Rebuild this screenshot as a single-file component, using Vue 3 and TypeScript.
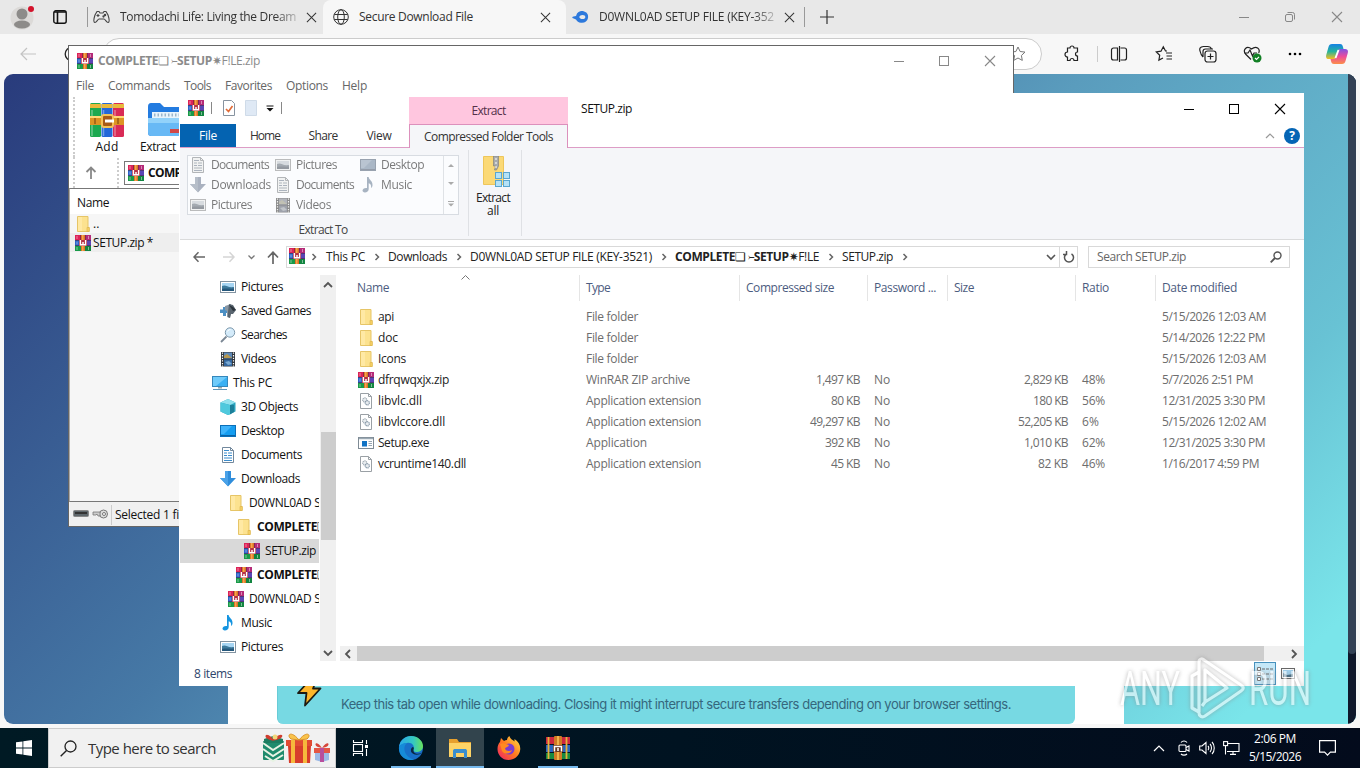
<script setup lang="ts">
interface Crumb { text: string; w: number; fancy?: boolean }
interface NavItem { icon: string; text: string; w: number; level: number; fancy?: boolean; active?: boolean }
interface FileRow {
  icon: string; name: string; nw: number; type: string; tw: number
  packed?: string; pw?: number; size?: string; sw?: number; ratio?: string; date: string; dw: number
}

// Adjusts tracking so that a label occupies the given width in pixels.
const vFit = {
  mounted(el: HTMLElement, binding: { value: number | undefined }) {
    const target = binding.value
    const count = Array.from(el.textContent ?? '').length
    if (!target || !count) return
    let spacing = 0
    for (let i = 0; i < 3; i++) {
      spacing += (target - el.getBoundingClientRect().width) / count
      el.style.letterSpacing = `${spacing.toFixed(3)}px`
    }
  },
}

const menus = [
  { text: 'File', w: 18 }, { text: 'Commands', w: 62 }, { text: 'Tools', w: 27 },
  { text: 'Favorites', w: 47 }, { text: 'Options', w: 42 }, { text: 'Help', w: 25 },
]
const crumbs: Crumb[] = [
  { text: 'This PC', w: 39 }, { text: 'Downloads', w: 59 },
  { text: 'D0WNL0AD SETUP FILE (KEY-3521)', w: 182 },
  { text: '', w: 144, fancy: true }, { text: 'SETUP.zip', w: 51 },
]
const targets = [
  { icon: 'doc', text: 'Documents', w: 58 }, { icon: 'pic', text: 'Pictures', w: 41 }, { icon: 'desk', text: 'Desktop', w: 43 },
  { icon: 'down', text: 'Downloads', w: 60 }, { icon: 'doc', text: 'Documents', w: 58 }, { icon: 'music', text: 'Music', w: 31 },
  { icon: 'pic', text: 'Pictures', w: 41 }, { icon: 'video', text: 'Videos', w: 35 },
]
const nav: NavItem[] = [
  { icon: 'pic', text: 'Pictures', w: 42, level: 1 },
  { icon: 'games', text: 'Saved Games', w: 70, level: 1 },
  { icon: 'lens', text: 'Searches', w: 46, level: 1 },
  { icon: 'video', text: 'Videos', w: 35, level: 1 },
  { icon: 'pc', text: 'This PC', w: 39, level: 0 },
  { icon: 'cube', text: '3D Objects', w: 57, level: 1 },
  { icon: 'desk', text: 'Desktop', w: 43, level: 1 },
  { icon: 'doc', text: 'Documents', w: 61, level: 1 },
  { icon: 'down', text: 'Downloads', w: 59, level: 1 },
  { icon: 'folder', text: 'D0WNL0AD SETUP FILE (KEY-3521)', w: 182, level: 2 },
  { icon: 'folder', text: '', w: 144, level: 3, fancy: true },
  { icon: 'rar', text: 'SETUP.zip', w: 51, level: 4, active: true },
  { icon: 'rar', text: '', w: 144, level: 3, fancy: true },
  { icon: 'rar', text: 'D0WNL0AD SETUP FILE (KEY-3521)', w: 182, level: 2 },
  { icon: 'music', text: 'Music', w: 31, level: 1 },
  { icon: 'pic', text: 'Pictures', w: 42, level: 1 },
]
const columns = [
  { text: 'Name', w: 32 }, { text: 'Type', w: 24 }, { text: 'Compressed size', w: 88 },
  { text: 'Password ...', w: 62 }, { text: 'Size', w: 20 }, { text: 'Ratio', w: 27 }, { text: 'Date modified', w: 75 },
]
const files: FileRow[] = [
  { icon: 'folder', name: 'api', nw: 16, type: 'File folder', tw: 52, date: '5/15/2026 12:03 AM', dw: 104 },
  { icon: 'folder', name: 'doc', nw: 20, type: 'File folder', tw: 52, date: '5/14/2026 12:22 PM', dw: 103 },
  { icon: 'folder', name: 'Icons', nw: 28, type: 'File folder', tw: 52, date: '5/15/2026 12:03 AM', dw: 104 },
  { icon: 'rar', name: 'dfrqwqxjx.zip', nw: 71, type: 'WinRAR ZIP archive', tw: 104, packed: '1,497 KB', pw: 44, size: '2,829 KB', sw: 44, ratio: '48%', date: '5/7/2026 2:51 PM', dw: 91 },
  { icon: 'dll', name: 'libvlc.dll', nw: 44, type: 'Application extension', tw: 115, packed: '80 KB', pw: 29, size: '180 KB', sw: 35, ratio: '56%', date: '12/31/2025 3:30 PM', dw: 103 },
  { icon: 'dll', name: 'libvlccore.dll', nw: 67, type: 'Application extension', tw: 115, packed: '49,297 KB', pw: 50, size: '52,205 KB', sw: 50, ratio: '6%', date: '5/15/2026 12:02 AM', dw: 104 },
  { icon: 'exe', name: 'Setup.exe', nw: 51, type: 'Application', tw: 61, packed: '392 KB', pw: 35, size: '1,010 KB', sw: 44, ratio: '62%', date: '12/31/2025 3:30 PM', dw: 103 },
  { icon: 'dll', name: 'vcruntime140.dll', nw: 88, type: 'Application extension', tw: 115, packed: '45 KB', pw: 29, size: '82 KB', sw: 30, ratio: '46%', date: '1/16/2017 4:59 PM', dw: 97 },
]
</script>

<template>
  <div class="desktop">
    <svg class="defs" width="0" height="0">
      <symbol id="rar" viewBox="0 0 16 16">
        <rect width="16" height="16" fill="#472436" />
        <rect width="5.500" height="5" fill="#dc2357" /><rect x="10.500" width="5.500" height="5" fill="#b52a78" />
        <rect y="5.500" width="5" height="5" fill="#2b62c9" /><rect x="11" y="5.500" width="5" height="5" fill="#5a45b5" />
        <rect y="11" width="6" height="5" fill="#189a48" /><rect x="10" y="11" width="6" height="5" fill="#128540" />
        <path d="M2 1v3M2 6.500v3M2 12v3M13.500 1v3M13.500 12v3" stroke="#fff" opacity=".45" />
        <rect x="6" width="4" height="16" fill="#dd7427" /><rect x="7" width="1.500" height="16" fill="#f7a64f" />
        <rect x="4" y="5" width="8" height="6" fill="#b53045" />
        <path d="M5.400 5v4.700h5.200V5M8 7v2.500" fill="none" stroke="#fff" stroke-width="1.400" />
      </symbol>
      <symbol id="folder" viewBox="0 0 16 16">
        <path d="M2.500.5h10.500v11h1v4h-11.500z" fill="#fce28f" stroke="#e6c567" /><path d="M3 1h4v14H3z" fill="#ffe9a4" /><path d="M12 11.500h2.300v4H12z" fill="#f6d268" stroke="#dcb248" stroke-width=".6" />
      </symbol>
      <symbol id="doc" viewBox="0 0 16 16">
        <path d="M2.500.5h8l3 3v12h-11z" fill="#fff" stroke="#72889c" /><path d="M10.500.5v3h3" fill="none" stroke="#72889c" /><path d="M4 3.500h5M4 6h3m1 0h4M4 8.500h3m1 0h4M4 11h8M4 13.500h8" stroke="#3b8ccc" stroke-width="1.200" />
      </symbol>
      <symbol id="pic" viewBox="0 0 16 16">
        <rect x=".5" y="2.500" width="15" height="11" fill="#fff" stroke="#8293a1" /><rect x="2" y="4" width="12" height="8" fill="#a6d5f3" /><path d="M2 7c4-2 5 2 12 1v4H2z" fill="#3d7a9c" /><path d="M2 10c4-1 8 0 12-.5V12H2z" fill="#24577b" />
      </symbol>
      <symbol id="games" viewBox="0 0 16 16">
        <path d="M0 6.500h3V4h3v3h2v3H6v3H3v-3H0z" fill="#4b8fc4" /><path d="M5 3l6-2v6l-1 8-3-1V8L5 7z" fill="#8a97a3" /><path d="M9 1l4 1 3 5-3 4h-2l-1 4-2-1V9z" fill="#59656f" /><path d="M9 2l4 2 3 3-3 1z" fill="#2b343c" />
      </symbol>
      <symbol id="lens" viewBox="0 0 16 16">
        <path d="M1 15l5.500-5.500" stroke="#7b8794" stroke-width="1.800" /><circle cx="10" cy="5.500" r="4.700" fill="#d4ebfa" stroke="#7d98ac" /><path d="M7.500 4.500a3 3 0 0 1 3-2" stroke="#fff" fill="none" />
      </symbol>
      <symbol id="video" viewBox="0 0 16 16">
        <rect x="1" y="1" width="14" height="14.500" fill="#30363c" /><rect x="4" y="1.500" width="8" height="6" fill="#5e89b8" /><rect x="4" y="8.500" width="8" height="6.500" fill="#34679e" /><path d="M4 5l3-2 5 4H4z" fill="#b79950" /><path d="M5 11l4-1 3 3-4 1z" fill="#7aa9d2" /><path d="M2.500 1.500v14M13.500 1.500v14" stroke="#fff" stroke-width="1.200" stroke-dasharray="1.300 1.300" />
      </symbol>
      <symbol id="pc" viewBox="0 0 16 16">
        <rect x=".5" y="1.500" width="15" height="10" fill="#39b0f3" stroke="#3587bb" /><path d="M1 2h14L4 11H1z" fill="#6fcbfa" /><path d="M6 12h4v1.500H6z" fill="#9aa" /><path d="M1 14.500h14" stroke="#5f95b8" />
      </symbol>
      <symbol id="cube" viewBox="0 0 16 16">
        <path d="M8 0l7.500 3.500v9L8 16 .5 12.500v-9z" fill="#2aa3bd" /><path d="M8 0l7.500 3.500L10 6 .5 3.500z" fill="#93e2ee" /><path d="M.5 3.500L10 6v9.500L8 16 .5 12.500z" fill="#50c9dd" /><path d="M10 6h4v7l-4 2.500z" fill="#1c7f99" />
      </symbol>
      <symbol id="desk" viewBox="0 0 16 16">
        <rect x=".5" y="2.500" width="15" height="11" fill="#159df0" stroke="#0b6fb8" /><path d="M1 3h11L4 11H1z" fill="#3eb3fb" /><path d="M1 12.500h14" stroke="#0a62a5" />
      </symbol>
      <symbol id="down" viewBox="0 0 16 16">
        <path d="M5 0h6v7h5l-8 8.500L0 7h5z" fill="#2f8ddb" /><path d="M5 0h3v15L0 7h5z" fill="#4aa2e8" />
      </symbol>
      <symbol id="music" viewBox="0 0 16 16">
        <path d="M7 0h1.600c.4 3 4.400 4 3.900 8.500-.1 1-.6 2-1.500 2.500.6-3-.6-4-2.300-4.700V12c0 2-1.700 3.500-3.800 3.500-1.500 0-2.400-.8-2.400-1.900C2.500 12 4.500 10.500 7 11z" fill="#1494e0" />
      </symbol>
      <symbol id="dll" viewBox="0 0 16 16">
        <path d="M2.500.5h8l3 3v12h-11z" fill="#fff" stroke="#9aa0a5" /><path d="M10.500.5v3h3" fill="none" stroke="#9aa0a5" /><circle cx="6.800" cy="7" r="2.100" fill="#e8ecef" stroke="#9aa5ae" stroke-width="1.100" stroke-dasharray="1.200 .5" /><circle cx="9.300" cy="9.800" r="2.100" fill="#e8ecef" stroke="#8396a6" stroke-width="1.100" stroke-dasharray="1.200 .5" />
      </symbol>
      <symbol id="exe" viewBox="0 0 16 16">
        <rect x=".5" y="2.500" width="15" height="11" fill="#fff" stroke="#7f8b95" /><path d="M1 3.500h14" stroke="#9aa8b3" stroke-width="1.500" /><rect x="4" y="6" width="5" height="5.500" fill="#1273c4" /><path d="M10.500 6.500H14m-3.500 2H14m-3.500 2H14" stroke="#98a6b2" />
      </symbol>
      <symbol id="close" viewBox="0 0 12 12"><path d="M1 1l10 10M11 1L1 11" fill="none" stroke="currentColor" stroke-width="1.100" /></symbol>
      <symbol id="chev" viewBox="0 0 6 8"><path d="M1.500 1l3 3-3 3" fill="none" stroke="currentColor" stroke-width="1.500" /></symbol>
    </svg>

    <div class="tabstrip">
      <svg class="avatar" width="26" height="26" viewBox="0 0 26 26"><circle cx="12" cy="14" r="11.500" fill="#dcdad8" /><circle cx="12" cy="10" r="5.500" fill="#8d8b89" /><ellipse cx="12" cy="20.500" rx="8" ry="4" fill="#8d8b89" /><circle cx="21" cy="5" r="3" fill="#d3132c" /></svg>
      <svg class="workspace" width="14" height="14" viewBox="0 0 14 14"><rect x=".8" y=".8" width="12.400" height="12.400" rx="2" fill="none" stroke="#111" stroke-width="1.400" /><path d="M1 2h12M4.500 2v11" stroke="#111" stroke-width="1.600" /></svg>
      <i class="sep"></i>
      <div class="tab first">
        <svg width="17" height="14" viewBox="0 0 17 14" fill="none" stroke="#444" stroke-width="1.100"><path d="M4 1.500h2l1 1.500h3l1-1.500h2l2 3.500c1 3 1.500 7 .2 7.500-1.500.5-3-3.500-4.200-3.500H6c-1.200 0-2.700 4-4.200 3.500C.5 12 1 8 2 5z" /><path d="M5 4v3M3.500 5.500h3" /><circle cx="12" cy="5" r=".7" /><circle cx="10.500" cy="6.500" r=".6" /></svg>
        <span class="t tabtext" v-fit="176">Tomodachi Life: Living the Dream</span>
        <svg class="x" width="11" height="11"><use href="#close" /></svg>
      </div>
      <div class="tab active">
        <svg width="16" height="16" viewBox="0 0 16 16" fill="none" stroke="#333" stroke-width="1"><circle cx="8" cy="8" r="7.300" /><ellipse cx="8" cy="8" rx="3.300" ry="7.300" /><path d="M1.300 5.500h13.400M1.300 10.500h13.400" /></svg>
        <span class="t tabtext" v-fit="114">Secure Download File</span>
        <svg class="x" width="11" height="11"><use href="#close" /></svg>
      </div>
      <div class="tab third">
        <svg width="17" height="14" viewBox="0 0 17 14"><path d="M5 3.500C7 1 10 1 11.500 1.200 15 2 16.500 4.500 16 8c-.6 3.500-3.500 5.200-7 4.800-2.500-.3-4-1.500-5-3.300L.5 8C0 7.500.5 6.500 1.500 6.500L4 6z" fill="#2d79dc" /><ellipse cx="10.500" cy="7" rx="2.800" ry="2" fill="#e8e8e8" /><path d="M7.500 7h2" stroke="#e8e8e8" stroke-width="1.500" /></svg>
        <span class="t tabtext" v-fit="175">D0WNL0AD SETUP FILE (KEY-352</span>
        <svg class="x" width="11" height="11"><use href="#close" /></svg>
      </div>
      <i class="sep end"></i>
      <svg class="plus" width="14" height="14" viewBox="0 0 14 14"><path d="M7 0v14M0 7h14" stroke="#333" stroke-width="1.200" /></svg>
      <div class="capt">
        <svg width="10" height="10"><path d="M0 5.500h10" stroke="#888" /></svg>
        <svg width="10" height="10" fill="none" stroke="#888"><rect x=".5" y="2.500" width="7" height="7" rx="1.500" /><path d="M2.500.5h5a2 2 0 0 1 2 2v5" /></svg>
        <svg width="12" height="12" color="#888"><use href="#close" /></svg>
      </div>
    </div>

    <div class="toolbar">
      <svg class="back" width="17" height="14" viewBox="0 0 17 14"><path d="M16 7H1M7 1L1 7l6 6" fill="none" stroke="#c3c3c3" stroke-width="1.200" /></svg>
      <svg class="reload" width="16" height="16" viewBox="0 0 16 16"><circle cx="8" cy="8" r="6.800" fill="none" stroke="#222" stroke-width="1.300" /></svg>
      <div class="omnibox"><svg width="16" height="16" viewBox="0 0 16 16"><path d="M8 1l2.100 4.500 4.900.6-3.600 3.400.9 4.900L8 12l-4.300 2.400.9-4.900L1 6.100l4.900-.6z" fill="none" stroke="#777" /></svg></div>
      <div class="tools">
        <svg width="18" height="18" viewBox="0 0 18 18" fill="none" stroke="#222" stroke-width="1.200"><path d="M4.500 3H7a2 2 0 0 1 4 0h3.500v4a2 2 0 0 0 0 4v4.500H11a2 2 0 0 0-4 0H4.500V12a2.300 2.300 0 0 1 0-5z" /></svg>
        <i class="tsep"></i>
        <svg width="18" height="18" viewBox="0 0 18 18" fill="none" stroke="#222" stroke-width="1.200"><path d="M7.500 3H3.500a2 2 0 0 0-2 2v8a2 2 0 0 0 2 2h4zM10.500 3h4a2 2 0 0 1 2 2v8a2 2 0 0 1-2 2h-4M9.500 1v16" /></svg>
        <svg width="18" height="18" viewBox="0 0 18 18" fill="none" stroke="#222" stroke-width="1.200"><path d="M12 6h-1.500L8.300 1.800 6 6.200l-4.700.8 3.400 3.300-.8 4.800L8 13M11 8h6M11.500 11H17M11.500 14H17" /></svg>
        <svg width="18" height="18" viewBox="0 0 18 18" fill="none" stroke="#222" stroke-width="1.200"><rect x="6" y="6" width="11" height="11" rx="2.500" /><path d="M11.500 8.500v6M8.500 11.500h6M4 12C3 11 1.500 8 1.200 6.500-.1 3 1.500 2 4.500 1.500h4c2 0 3.500.8 4 2.500M4 12V6.500c0-1.500.8-2.500 2.500-2.500H14" /></svg>
        <svg width="19" height="18" viewBox="0 0 19 18"><path d="M8 14.500L2.500 9C-.5 5 3.500 0 8.500 4c5-4 9 0 7.200 4M1 8h4l2-3 2.500 6L11 8h3" fill="none" stroke="#222" stroke-width="1.200" /><circle cx="14" cy="13" r="4.500" fill="#128025" /><path d="M12 13l1.500 1.500L16 11.800" fill="none" stroke="#fff" stroke-width="1.200" /></svg>
        <svg width="14" height="4" viewBox="0 0 14 4"><circle cx="2" cy="2" r="1.300" /><circle cx="7" cy="2" r="1.300" /><circle cx="12" cy="2" r="1.300" /></svg>
        <svg width="22" height="20" viewBox="0 0 22 20"><defs><linearGradient id="cpa" x1="0" y1="0" x2="0" y2="1"><stop offset="0" stop-color="#1581e5" /><stop offset=".5" stop-color="#26b49b" /><stop offset="1" stop-color="#f7bd22" /></linearGradient><linearGradient id="cpb" x1="0" y1="0" x2="0" y2="1"><stop offset="0" stop-color="#7f52e4" /><stop offset=".5" stop-color="#ed4b9a" /><stop offset="1" stop-color="#fb8f49" /></linearGradient></defs><path d="M6 0h8c2 0 2.500 1 3 3l.5 2h-3c-2 0-2.500 1.500-3 3L10 13c-.5 1.500-1 2-3 2H3c-3 0-3.500-2-2.500-5l2-7C3 1 4 0 6 0z" fill="url(#cpa)" /><path d="M16 20H8c-2 0-2.500-1-3-3l-.5-2h3c2 0 2.500-1.500 3-3L12 7c.5-1.500 1-2 3-2h4c3 0 3.500 2 2.500 5l-2 7c-.5 2-1.500 3-3.500 3z" fill="url(#cpb)" /><path d="M12.500 6L9.500 14" stroke="#fff" stroke-width="2" /></svg>
      </div>
    </div>

    <div class="page">
      <div class="card">
        <div class="notice">
          <svg width="26" height="28" viewBox="0 0 26 28"><path d="M13 1L2 13h8.500L9 25.500 24.500 8.500H17L20 1z" fill="#fdb62a" stroke="#1c1a12" stroke-width="1.800" stroke-linejoin="round" /></svg>
          <span class="t keep" v-fit="670">Keep this tab open while downloading. Closing it might interrupt secure transfers depending on your browser settings.</span>
        </div>
      </div>
      <div class="pagebar"><i></i></div>
    </div>

    <div class="winrar">
      <div class="wtitle">
        <svg width="16" height="16"><use href="#rar" /></svg>
        <span class="t" v-fit="162"><b>COMPLETE❏</b> <small>⤚</small><b>SETUP✷</b>F!LE.zip</span>
        <div class="wcap">
          <svg width="10" height="10"><path d="M0 5.500h10" stroke="#888" /></svg>
          <svg width="10" height="10"><rect x=".5" y=".5" width="9" height="9" fill="none" stroke="#888" /></svg>
          <svg width="12" height="12" color="#888"><use href="#close" /></svg>
        </div>
      </div>
      <div class="wmenu"><span v-for="m in menus" :key="m.text" class="t" v-fit="m.w">{{ m.text }}</span></div>
      <div class="wtools">
        <div class="wbtn add">
          <svg width="36" height="36" viewBox="0 0 36 36"><rect x="1" y="1" width="11" height="34" rx="1.500" fill="#1ca94f" /><rect x="12.500" y="1" width="11" height="34" rx="1.500" fill="#2468d8" /><rect x="24" y="1" width="11" height="34" rx="1.500" fill="#d92b56" /><path d="M1 2h11v4H1zM12.500 2h11v4h-11zM24 2h11v4H24z" fill="#e9b93c" /><path d="M3 8v26M14.500 8v26M26 8v26" stroke="#fff" stroke-width="1.500" opacity=".35" /><path d="M1 14h34v9H1z" fill="#dd9424" /><path d="M1 15h34" stroke="#ffd978" stroke-width="2" /><rect x="13" y="13" width="11" height="12" rx="2" fill="#a85a17" stroke="#f4c258" stroke-width="2" /><path d="M16 19h9" stroke="#fff" stroke-width="3" /><path d="M6 16v6M29 16v6" stroke="#985a13" stroke-width="1.500" /></svg>
          <span class="t" v-fit="23">Add</span>
        </div>
        <div class="wbtn ext">
          <svg width="36" height="36" viewBox="0 0 36 36"><path d="M1 5c0-3 1-4 3-4h9l4 4h19v29H5c-3 0-4-1-4-4z" fill="#237be0" /><path d="M5 10h31v6H5z" fill="#e9f4fc" /><path d="M7 13h29" stroke="#9eb6ca" stroke-width="3" stroke-dasharray="1.500 2" /><path d="M1 16h35v18H5c-3 0-4-1-4-4z" fill="#68b9f5" /><path d="M1 16h35v5H1z" fill="#92d2fa" /><rect x="23" y="27" width="13" height="4" fill="#d14747" /></svg>
          <span class="t" v-fit="36">Extract</span>
        </div>
      </div>
      <div class="waddr">
        <svg width="12" height="14" viewBox="0 0 12 14"><path d="M6 13V2M1.500 6L6 1.500 10.500 6" fill="none" stroke="#888" stroke-width="1.800" /></svg>
        <i></i>
        <div class="wfield"><svg width="16" height="16"><use href="#rar" /></svg><b class="t" v-fit="58">COMPLETE</b></div>
      </div>
      <div class="wlist">
        <div class="whead"><span class="t" v-fit="32">Name</span></div>
        <div class="wrow"><svg width="16" height="16"><use href="#folder" /></svg><span>..</span></div>
        <div class="wrow sel"><svg width="16" height="16"><use href="#rar" /></svg><span class="t" v-fit="60">SETUP.zip *</span></div>
      </div>
      <div class="wstatus">
        <svg width="16" height="8" viewBox="0 0 16 8"><rect x=".5" y=".5" width="15" height="6" rx="1" fill="#5f676b" stroke="#888" /><path d="M2 3h12" stroke="#333" stroke-width="2" /></svg>
        <svg width="16" height="10" viewBox="0 0 16 10"><circle cx="11.500" cy="5" r="4" fill="#ddd" stroke="#777" /><circle cx="12" cy="5" r="1.500" fill="#fff" stroke="#777" /><path d="M8 3H1v3h3l1-1 1 2h2z" fill="#ccc" stroke="#777" stroke-width=".8" /></svg>
        <i></i><span class="t" v-fit="64">Selected 1 fi</span>
      </div>
    </div>

    <div class="explorer">
      <div class="etop">
        <div class="qat">
          <svg width="16" height="16"><use href="#rar" /></svg><i></i>
          <svg class="q1" width="12" height="16" viewBox="0 0 12 16"><path d="M.5.500h8l3 3v12H.5z" fill="#fff" stroke="#8793a0" /><path d="M3 9l2.500 2.500L9.500 6" fill="none" stroke="#e06b38" stroke-width="1.700" /></svg>
          <svg class="q2" width="12" height="16" viewBox="0 0 12 16"><path d="M.5.500h11v15H.5z" fill="#dfe9f5" stroke="#cfdbe8" /></svg>
          <svg class="q3" width="8" height="7" viewBox="0 0 8 7"><path d="M.5 1h7" stroke="#111" /><path d="M.5 3h7L4 6.500z" fill="#111" /></svg><i></i>
        </div>
        <div class="etabs">
          <span class="filetab"><span class="t" v-fit="18">File</span></span>
          <span class="etab"><span class="t" v-fit="30">Home</span></span>
          <span class="etab"><span class="t" v-fit="29">Share</span></span>
          <span class="etab"><span class="t" v-fit="25">View</span></span>
        </div>
        <div class="ctx"><div class="ctxhead"><span class="t" v-fit="34">Extract</span></div><div class="ctxtab"><span class="t" v-fit="129">Compressed Folder Tools</span></div></div>
        <div class="rest">
          <div class="etitle"><span class="t" v-fit="51">SETUP.zip</span>
            <div class="ecap">
              <svg width="10" height="10"><path d="M0 5.500h10" stroke="#000" /></svg>
              <svg width="10" height="10"><rect x=".5" y=".5" width="9" height="9" fill="none" stroke="#000" /></svg>
              <svg width="12" height="12" color="#000"><use href="#close" /></svg>
            </div>
          </div>
          <div class="ehelp">
            <svg width="10" height="6"><path d="M1 5l4-4 4 4" fill="none" stroke="#999" stroke-width="1.200" /></svg>
            <span class="help">?</span>
          </div>
        </div>
      </div>

      <div class="ribbon">
        <div class="group">
          <div class="gallery">
            <div class="gitems"><div v-for="(g, i) in targets" :key="i" class="gitem"><svg width="16" height="16"><use :href="'#' + g.icon" /></svg><span class="t" v-fit="g.w">{{ g.text }}</span></div></div>
            <div class="gscroll">
              <svg width="6" height="4"><path d="M0 4l3-3 3 3z" fill="#aaa" /></svg>
              <svg width="6" height="4"><path d="M0 0l3 3 3-3z" fill="#aaa" /></svg>
              <svg width="6" height="6"><path d="M0 .5h6" stroke="#aaa" /><path d="M0 2.500l3 3 3-3z" fill="#aaa" /></svg>
            </div>
          </div>
          <div class="glabel"><span class="t" v-fit="49">Extract To</span></div>
        </div>
        <div class="extractall">
          <svg width="28" height="32" viewBox="0 0 28 32"><path d="M.500.500h20v28H.5z" fill="#fbd976" stroke="#eec65b" /><path d="M10.500 0h5v10l-2 4h-2l1-4h-2z" fill="#a9abad" stroke="#77797b" stroke-width=".6" /><path d="M13 2v11" stroke="#fff" stroke-dasharray="2 2" /><g fill="#b4e2f8" stroke="#5ba6cf"><rect x="12.500" y="16.500" width="6" height="6" /><rect x="20.500" y="16.500" width="6" height="6" /><rect x="12.500" y="24.500" width="6" height="6" /><rect x="20.500" y="24.500" width="6" height="6" /></g></svg>
          <span class="t" v-fit="34">Extract</span><span class="t" v-fit="12">all</span>
        </div>
      </div>

      <div class="addrrow">
        <svg width="12" height="12" viewBox="0 0 12 12"><path d="M12 6H1M5.500 1.200L1 6l4.500 4.800" fill="none" stroke="#666" stroke-width="1.500" /></svg>
        <svg width="12" height="12" viewBox="0 0 12 12"><path d="M0 6h11M6.500 1.200L11 6l-4.500 4.800" fill="none" stroke="#d5d5d5" stroke-width="1.500" /></svg>
        <svg class="recent" width="7" height="5"><path d="M.5.500l3 3 3-3" fill="none" stroke="#777" stroke-width="1.300" /></svg>
        <svg width="12" height="13" viewBox="0 0 12 13"><path d="M6 13V1.500M1 6.500L6 1.200l5 5.300" fill="none" stroke="#666" stroke-width="1.700" /></svg>
        <div class="addr">
          <svg width="16" height="16"><use href="#rar" /></svg>
          <svg class="c0" width="6" height="8"><use href="#chev" /></svg>
          <template v-for="c in crumbs" :key="c.w">
            <span v-if="c.fancy" class="t" v-fit="c.w"><b>COMPLETE❏</b> <small>⤚</small><b>SETUP✷</b>F!LE</span>
            <span v-else class="t" v-fit="c.w">{{ c.text }}</span>
            <span class="chev"><svg width="6" height="8"><use href="#chev" /></svg></span>
          </template>
          <svg class="dd" width="10" height="7"><path d="M1 1l4 4 4-4" fill="none" stroke="#555" stroke-width="1.600" /></svg>
          <div class="refresh"><svg width="12" height="13" viewBox="0 0 12 13"><path d="M8.500 2.800a4.500 4.500 0 1 1-5 0M3.500 0v3.500H0" fill="none" stroke="#555" stroke-width="1.500" /></svg></div>
        </div>
        <div class="search"><span class="t" v-fit="89">Search SETUP.zip</span><svg width="12" height="12" viewBox="0 0 12 12"><circle cx="7.500" cy="4.500" r="3.500" fill="none" stroke="#555" stroke-width="1.400" /><path d="M5 7L.7 11.300" stroke="#555" stroke-width="1.800" /></svg></div>
      </div>

      <div class="body">
        <div class="tree">
          <div v-for="(n, i) in nav" :key="i" class="node" :class="{ active: n.active }" :style="{ paddingLeft: 32 + n.level * 8 + 'px' }">
            <svg width="16" height="16"><use :href="'#' + n.icon" /></svg>
            <span v-if="n.fancy" class="t" v-fit="n.w"><b>COMPLETE❏</b> <small>⤚</small><b>SETUP✷</b>F!LE</span>
            <span v-else class="t" v-fit="n.w">{{ n.text }}</span>
          </div>
        </div>
        <div class="vbar">
          <svg width="10" height="7"><path d="M1 6l4-4 4 4" fill="none" stroke="#555" stroke-width="1.800" /></svg>
          <i></i>
          <svg width="10" height="7"><path d="M1 1l4 4 4-4" fill="none" stroke="#555" stroke-width="1.800" /></svg>
        </div>
        <div class="main">
          <div class="grid head">
            <svg class="sort" width="9" height="5"><path d="M.5 4.500l4-4 4 4" fill="none" stroke="#777" /></svg>
            <span v-for="c in columns" :key="c.text" class="cell"><span class="t" v-fit="c.w">{{ c.text }}</span></span>
          </div>
          <div v-for="f in files" :key="f.name" class="grid row">
            <span class="cell name"><svg width="16" height="16"><use :href="'#' + f.icon" /></svg><span class="t" v-fit="f.nw">{{ f.name }}</span></span>
            <span class="cell"><span class="t" v-fit="f.tw">{{ f.type }}</span></span>
            <span class="cell num"><span v-if="f.packed" class="t" v-fit="f.pw">{{ f.packed }}</span></span>
            <span class="cell"><span v-if="f.packed" class="t" v-fit="16">No</span></span>
            <span class="cell num"><span v-if="f.size" class="t" v-fit="f.sw">{{ f.size }}</span></span>
            <span class="cell"><span v-if="f.ratio" class="t" v-fit="f.ratio.length > 2 ? 23 : 17">{{ f.ratio }}</span></span>
            <span class="cell"><span class="t" v-fit="f.dw">{{ f.date }}</span></span>
          </div>
          <div class="hbar">
            <svg width="7" height="10"><path d="M6 1L2 5l4 4" fill="none" stroke="#555" stroke-width="1.800" /></svg><i></i>
            <svg width="7" height="10"><path d="M1 1l4 4-4 4" fill="none" stroke="#555" stroke-width="1.800" /></svg>
          </div>
        </div>
      </div>
      <div class="status">
        <span class="t" v-fit="38">8 items</span>
        <div class="views">
          <span class="vsel"><svg width="18" height="16" viewBox="0 0 18 16"><path d="M1.500 1.500h3v3h-3zM1.500 6.500h3v3h-3zM1.500 11.500h3v3h-3z" fill="#fff" stroke="#777" /><path d="M6 3h3m1 0h3m1 0h3M6 8h3m1 0h3m1 0h3M6 13h3m1 0h3m1 0h3" stroke="#666" /></svg></span>
          <svg width="14" height="11" viewBox="0 0 14 11"><rect x=".5" y=".5" width="13" height="10" fill="#fff" stroke="#666" /><rect x="2" y="2" width="10" height="7" fill="#9fd3f2" /><path d="M2 5l4 2 6-1v3H2z" fill="#3d657d" /></svg>
        </div>
      </div>
    </div>

    <svg class="watermark" width="200" height="64" viewBox="0 0 200 64">
      <text x="3" y="48" textLength="60" lengthAdjust="spacingAndGlyphs">ANY</text>
      <text x="132" y="48" textLength="62" lengthAdjust="spacingAndGlyphs">RUN</text>
      <path d="M82 15l-7 4v32l7 4V5c0-3 3-4 5-2l37 25c3 2 3 4 0 6L88 59c-3 2-6 0-6-3M88 13v32l22-14zM88 45l-3 4" fill="none" stroke="#fff" stroke-width="3.200" stroke-linejoin="round" />
    </svg>

    <div class="taskbar">
      <div class="start"><svg width="16" height="16" viewBox="0 0 16 16"><path d="M0 2.300l6.500-.9v6.100H0zM7.300 1.300L16 0v7.500H7.300zM0 8.400h6.500v6.200L0 13.700zM7.300 8.400H16V16l-8.700-1.200z" fill="#fff" /></svg></div>
      <div class="tsearch">
        <svg width="17" height="17" viewBox="0 0 17 17"><circle cx="10.500" cy="6.500" r="5.500" fill="none" stroke="#222" stroke-width="1.300" /><path d="M6.500 10.500L.7 16.300" stroke="#222" stroke-width="1.400" /></svg>
        <span class="t" v-fit="128">Type here to search</span>
        <svg class="gifts" width="69" height="34" viewBox="0 0 69 34">
          <rect x="1" y="10" width="21" height="19" rx="1" fill="#1f8b6d" /><path d="M1 12l10 7 11-7M1 18l10 7 11-7M3 25l8 5 10-6" fill="none" stroke="#e8f3e4" stroke-width="2" /><path d="M2 8l9-3 10 3v4H2z" fill="#1d7c60" /><path d="M11 9C4 0 0 7 11 9c10-9 13-2 0 0" fill="#cf3e2f" stroke="#cf3e2f" stroke-width="1.500" /><circle cx="13" cy="6" r="2.500" fill="#f2d67a" />
          <path d="M24 9h26v6H24z" fill="#e14b33" /><path d="M26 15h23l-1 17H27z" fill="#d73c2c" /><path d="M29 9h4v23h-4zM41 9h4v23h-4z" fill="#f6b83c" /><path d="M37 9C29-1 24 4 29 8zM37 9c8-10 13-5 8-1z" fill="#f9c34b" stroke="#dc9428" />
          <path d="M52 17h16v5H52z" fill="#e45745" /><path d="M53 22h14v7l-7 2-7-2z" fill="#9cb9e6" /><path d="M58 17h4v14h-4z" fill="#b84f9d" /><path d="M60 17c-6-9-9-3-4-1zM60 17c6-9 9-3 4-1z" fill="#d6473b" />
        </svg>
      </div>
      <div class="tb"><svg width="16" height="16" viewBox="0 0 16 16" fill="none" stroke="#fff" stroke-width="1.100"><rect x="1.500" y="4.500" width="9" height="7" /><path d="M1.500 0v2.500h9V0M1.500 16v-2.500h9V16M14.500 0v4M14.500 9v7" /><rect x="13.500" y="5.500" width="2" height="2" fill="#fff" /></svg></div>
      <div class="tb run edge"><svg width="26" height="26" viewBox="0 0 26 26"><defs><linearGradient id="eg" x1="0" y1="0" x2="1" y2="0"><stop offset="0" stop-color="#2aa8ea" /><stop offset=".6" stop-color="#35c9c1" /><stop offset="1" stop-color="#68e35a" /></linearGradient></defs><circle cx="13" cy="13" r="12" fill="#1870c9" /><path d="M1 12C2 5 7 1 13 1c7 0 12 5 12 10 0 4-3 6-7 6-2 0-3-1-2.500-2.500C17 10 13 7 9 8c-4 .500-7 2-8 4z" fill="url(#eg)" /><path d="M9 8c-5 4-3 14 7 16.500C7 27 0 20 1 12c1.500-2.500 4-4 8-4z" fill="#168bd8" /><path d="M15.500 14.500C15 19 20 20 24 17.500 21 21 14 20 13 16.500c-.5-2.500.5-4 2-4.500 1 .5 1 1.500.5 2.500z" fill="#0a2945" /></svg></div>
      <div class="tb run files"><svg width="24" height="21" viewBox="0 0 24 21"><path d="M1 1h8l2 3h12v4H1z" fill="#e7a02d" /><path d="M1 5h22v14H1z" fill="#fdd366" /><path d="M5 20v-7c0-1.500 1-2 2-2h10c1 0 2 .500 2 2v7h-3v-5H8v5z" fill="#3a8fcf" /></svg></div>
      <div class="tb"><svg width="24" height="24" viewBox="0 0 24 24"><defs><linearGradient id="ff" x1="1" y1="0" x2="0" y2="1"><stop offset="0" stop-color="#ffe546" /><stop offset=".5" stop-color="#ff7a1f" /><stop offset="1" stop-color="#ee1c6b" /></linearGradient></defs><path d="M3 6l1-4 3 3c1-.800 2-1 3-1 0-1.500 1-3 2.500-4 .500 3 3 3.500 5 5.500V3C22 6 24 10 23 15c-1 5-6 9-11.500 9C5 24 .500 19 .500 13 .500 10 1.500 7.500 3 6z" fill="url(#ff)" /><circle cx="12" cy="13" r="5.500" fill="#7a3bd1" /><path d="M3 8c4-2 6 .500 9 1-.500 2-3 2-4 3.500 1 3 5 3 7 1.500-1 4-7 5-10 1z" fill="#ff8a20" /></svg></div>
      <div class="tb run wr"><svg width="24" height="24" viewBox="0 0 24 24"><rect y="1" width="24" height="7" fill="#cc2740" /><rect y="9" width="24" height="7" fill="#2966c0" /><rect y="17" width="24" height="6" fill="#178a40" /><path d="M2.500 1v22M20.500 1v22" stroke="#e6b13b" stroke-width="1.800" /><rect x="8" y="0" width="8" height="24" rx="1" fill="#cf7b25" /><path d="M12 0v24" stroke="#efb34b" stroke-width="2" /><rect x="7" y="9" width="10" height="7" fill="#6a3921" /><path d="M8.500 15.500v-5h7v5M12 12v3" stroke="#fff" stroke-width="1.500" fill="none" /></svg></div>
      <div class="tray">
        <svg width="12" height="7"><path d="M1 6l5-5 5 5" fill="none" stroke="#fff" stroke-width="1.200" /></svg>
        <svg class="meet" width="12" height="16" viewBox="0 0 12 16" fill="none" stroke="#fff" stroke-width="1.100"><rect x="1" y="5" width="7" height="6.500" rx="1" /><path d="M8 7.500l3-1.500v5l-3-1.500M3 2.500C4.500.500 7.500.500 9 2.500M3 14c1.500 1.500 4.500 1.500 6 0" /></svg>
        <svg class="vol" width="17" height="14" viewBox="0 0 17 14" fill="none" stroke="#fff" stroke-width="1.100"><path d="M.7 5v4H3l4 3.500v-11L3 5zM9 5c1 1 1 3 0 4M11 3c2 2 2 6 0 8M13 1c3 3 3 9 0 12" /></svg>
        <svg class="net" width="17" height="14" viewBox="0 0 17 14" fill="none" stroke="#fff" stroke-width="1.100"><path d="M5 2.500h11v8H4M10 10.500v3M7 13.400h6" /><rect x=".6" y=".6" width="4" height="4" /><path d="M2.500 5v8.500" /></svg>
        <div class="clock"><span class="t" v-fit="42">2:06 PM</span><span class="t" v-fit="52">5/15/2026</span></div>
        <svg class="note" width="17" height="16" viewBox="0 0 17 16"><path d="M.6.600h15.800v11.500h-5l-2.900 3-2.900-3h-5z" fill="none" stroke="#fff" stroke-width="1.200" /></svg>
      </div>
    </div>
  </div>
</template>

<style>
html, body { margin: 0; overflow: hidden; }
</style>

<style scoped>
* { box-sizing: border-box; }
.desktop { position: relative; width: 1360px; height: 768px; overflow: hidden; background: #f7f7f7; font: 12px/16px "Open Sans", "Noto Sans", "DejaVu Sans", sans-serif; color: #111; }
.defs { position: absolute; }
svg { flex: none; display: block; }
.t { display: inline-block; flex: none; white-space: nowrap; }
.t small { font-size: 8px; line-height: 0; vertical-align: 2px; }

.tabstrip { height: 34px; background: #e8e8e8; display: flex; align-items: center; }
.avatar { margin-left: 10px; }
.workspace { margin-left: 17px; }
.sep { width: 1px; height: 20px; background: #999; margin-left: 20px; }
.sep.end { margin-left: 0; }
.tab { height: 34px; display: flex; align-items: center; color: #333; flex: none; }
.tab .tabtext { margin-left: 10px; }
.tab .x { margin-left: auto; }
.tab.first { width: 235px; padding: 0 6px 0 5px; }
.tab.active { width: 243px; background: #f7f7f7; border-radius: 8px 8px 0 0; padding: 0 15px 0 10px; }
.tab.third { width: 238px; padding: 0 9px 0 6px; }
.tab.third .tabtext, .tab.first .tabtext { -webkit-mask: linear-gradient(90deg, #000 88%, #0004); mask: linear-gradient(90deg, #000 88%, #0004); }
.plus { margin-left: 15px; }
.capt { margin-left: auto; display: flex; align-items: center; gap: 36px; margin-right: 17px; }

.toolbar { height: 40px; display: flex; align-items: center; }
.back { margin-left: 20px; }
.reload { margin-left: 27px; }
.omnibox { margin-left: 23px; width: 939px; height: 32px; border: 1px solid #ccc; border-radius: 16px; background: #fff; display: flex; align-items: center; justify-content: flex-end; padding-right: 15px; }
.tools { flex: 1; display: flex; align-items: center; margin-left: 21px; }
.tools > svg:nth-child(3) { margin-left: 12px; }
.tools > svg:nth-child(4) { margin-left: 27px; }
.tools > svg:nth-child(5) { margin-left: 26px; }
.tools > svg:nth-child(6) { margin-left: 26px; }
.tools > svg:nth-child(7) { margin-left: 26px; }
.tools > svg:nth-child(8) { margin-left: 24px; }
.tsep { width: 1px; height: 16px; background: #ccc; margin-left: 16px; }

.page { height: 650px; margin: 0 4px; border-radius: 9px; overflow: hidden; background: linear-gradient(135deg, #293b7c, #4679a6 38%, #5a9cbd 54%, #62b1ca 68%, #68c2d4 79%, #7ae5ea 94%); display: flex; align-items: stretch; }
.card { margin-left: 224px; width: 896px; align-self: flex-end; background: #fff; padding: 0 49px; }
.notice { height: 52px; background: #77d9e3; border-left: 1px solid #68ccd7; border-radius: 6px; display: flex; align-items: center; padding: 11px 0 0 18px; }
.notice svg { margin-top: -20px; }
.keep { margin-left: 19px; font: 13px/18px Inter, sans-serif; color: #35677d; }
.pagebar { width: 8px; margin-left: auto; background: #0f172a; }
.pagebar i { display: block; height: 580px; background: #334155; border-radius: 0 0 4px 4px; }

.winrar { position: absolute; left: 68px; top: 45px; width: 946px; height: 482px; background: #fff; border: 1px solid #666; display: flex; flex-direction: column; }
.wtitle { height: 29px; display: flex; align-items: center; padding: 0 17px 0 8px; gap: 5px; color: #8b8b8b; }
.wcap { margin-left: auto; display: flex; align-items: center; gap: 35px; }
.wmenu { height: 22px; display: flex; align-items: center; gap: 14px; padding-left: 7px; color: #666; }
.wtools { height: 60px; margin-left: 4px; border-left: 2px dotted #ccc; display: flex; padding-top: 5px; }
.wbtn { display: flex; flex-direction: column; align-items: center; gap: 1px; }
.wbtn.add { margin-left: 14px; width: 36px; }
.wbtn.ext { margin-left: 15px; width: 36px; }
.wbtn.ext svg { margin-right: -14px; }
.waddr { height: 31px; margin-left: 4px; border-left: 2px dotted #ccc; display: flex; align-items: center; padding-left: 10px; }
.waddr i { height: 30px; border-left: 2px dotted #ccc; margin-left: 20px; }
.wfield { margin-left: 5px; border: 1px solid #777; height: 24px; flex: 1; display: flex; align-items: center; gap: 4px; padding: 1px 0 0 3px; }
.wlist { height: 314px; background: #f6f6f6; border: 1px solid #777; border-left: 1px solid #aaa; }
.whead { height: 25px; background: #fff; padding: 6px 7px 3px; }
.wrow { height: 19px; display: flex; align-items: center; gap: 2px; padding-left: 5px; }
.wrow.sel { background: #eee; }
.wstatus { flex: 1; background: #f0f0f0; display: flex; align-items: center; gap: 3px; padding: 2px 0 0 4px; }
.wstatus svg { margin-top: -2px; }
.wstatus i { width: 1px; height: 20px; background: #ccc; }

.explorer { position: absolute; left: 179px; top: 93px; width: 1125px; height: 593px; background: #fff; display: flex; flex-direction: column; padding-left: 1px; }
.etop { height: 55px; display: grid; grid-template: 31px 23px / 229px 159px 1fr; border-bottom: 1px solid #dd9dc6; flex: none; }
.etop > .qat { grid-area: 1 / 1; }
.etabs { grid-area: 2 / 1; }
.ctx { grid-area: 1 / 2 / 3 / 3; }
.rest { grid-area: 1 / 3 / 3 / 4; }
.qat { display: flex; align-items: center; padding: 0 0 1px 8px; }
.qat i { width: 1px; height: 12px; background: #888; margin-left: 7px; }
.q1 { margin-left: 11px; }
.q2 { margin-left: 10px; }
.q3 { margin-left: 9px; }
.etabs { display: flex; align-items: stretch; }
.filetab, .etab { display: flex; align-items: center; justify-content: center; height: 23px; padding-top: 1px; }
.filetab { width: 56px; background: #0463b1; color: #fff; }
.etab { width: 58px; color: #333; }
.etab:nth-child(4) { width: 54px; }
.ctx { display: flex; flex-direction: column; padding-top: 4px; }
.ctxhead { height: 27px; flex: none; background: #ffc6df; display: flex; align-items: center; justify-content: center; color: #54304a; padding-top: 1px; }
.ctxtab { height: 24px; flex: none; background: #f5f6f9; border: 1px solid #dc90bc; border-bottom: 0; display: flex; align-items: center; justify-content: center; color: #333; }
.etitle { height: 31px; display: flex; align-items: center; padding: 0 18px 0 13px; }
.ecap { margin-left: auto; display: flex; align-items: center; gap: 35px; }
.ehelp { height: 23px; display: flex; align-items: center; justify-content: flex-end; gap: 9px; padding-right: 4px; }
.help { width: 16px; height: 16px; border-radius: 50%; background: #0565b5; color: #fff; font-weight: 700; text-align: center; line-height: 16px; }
.ribbon { height: 92px; flex: none; background: #f5f6f9; border-bottom: 1px solid #dadbdc; display: flex; padding-top: 2px; }
.group { width: 289px; border-right: 1px solid #dfe1e5; padding: 5px 9px 0 7px; height: 86px; }
.gallery { height: 60px; border: 1px solid #d8dce2; background: #fbfcfe; display: flex; }
.gitems { flex: 1; display: grid; grid-template: repeat(3, 20px) / 85px 85px 84px; margin-top: -1px; opacity: .65; }
.gitem { display: flex; align-items: center; gap: 5px; padding-left: 2px; color: #333; }
.gitem svg { opacity: .85; filter: grayscale(.7) sepia(.1) hue-rotate(15deg) brightness(.92); }
.gscroll { width: 15px; border-left: 1px solid #dfe2e6; display: flex; flex-direction: column; justify-content: space-around; align-items: center; }
.glabel { display: flex; justify-content: center; padding-top: 7px; color: #444; }
.extractall { width: 53px; height: 86px; border-right: 1px solid #dfe1e5; display: flex; flex-direction: column; align-items: center; padding: 6px 4px 0 0; color: #222; }
.extractall span { line-height: 13px; }
.extractall svg { margin: 0 -7px 3px 0; }
.addrrow { height: 35px; flex: none; display: flex; align-items: center; padding: 0 0 1px 13px; }
.addrrow > svg:nth-child(2) { margin-left: 18px; }
.recent { margin-left: 13px; }
.addrrow > svg:nth-child(4) { margin-left: 12px; }
.addr { margin-left: 7px; width: 792px; height: 22px; border: 1px solid #d9d9d9; display: flex; align-items: center; padding-left: 2px; color: #222; }
.addr > svg:first-child { margin-top: -2px; }
.c0 { margin: 0 9px 0 6px; color: #666; }
.chev { width: 23px; display: flex; justify-content: center; color: #666; flex: none; }
.dd { margin-left: auto; }
.refresh { width: 18px; height: 20px; margin-left: 3px; border-left: 1px solid #d9d9d9; display: flex; align-items: center; justify-content: center; }
.search { margin-left: 10px; width: 202px; height: 22px; border: 1px solid #d9d9d9; display: flex; align-items: center; justify-content: space-between; padding: 0 7px 0 8px; color: #666; }
.body { height: 386px; flex: none; display: flex; }
.tree { width: 139px; overflow: hidden; flex: none; margin-right: 1px; }
.node { height: 24px; display: flex; align-items: center; gap: 5px; }
.node.active { background: #d9d9d9; }
.vbar { width: 16px; flex: none; background: #f0f0f0; display: flex; flex-direction: column; align-items: center; padding: 6px 0 4px; }
.vbar i { width: 15px; height: 108px; margin-top: 144px; background: #cdcdcd; }
.vbar svg:last-child { margin-top: auto; }
.main { flex: 1; display: flex; flex-direction: column; position: relative; }
.grid { display: grid; grid-template-columns: 244px 160px 128px 80px 128px 80px 1fr; }
.cell { display: flex; align-items: center; padding-left: 6px; color: #6d6d6d; }
.cell:first-of-type { padding-left: 21px; }
.head { height: 26px; margin-bottom: 5px; position: relative; }
.head .cell { color: #4c5c80; border-right: 1px solid #e5e5e5; }
.head .cell:last-child { border: 0; }
.sort { position: absolute; left: 125px; top: 0; }
.row { height: 21px; }
.row .name { padding-left: 22px; gap: 4px; color: #222; }
.num { justify-content: flex-end; padding-right: 8px; }
.hbar { margin: auto 0 0 4px; height: 15px; background: #f0f0f0; display: flex; align-items: center; padding: 0 6px 0 4px; }
.hbar i { height: 15px; width: 907px; margin-left: 6px; background: #cdcdcd; }
.hbar svg:last-child { margin-left: auto; }
.status { flex: 1; display: flex; align-items: center; padding: 0 9px 0 14px; color: #2d456b; }
.views { margin-left: auto; display: flex; align-items: center; gap: 5px; }
.vsel { width: 22px; height: 23px; border: 1px solid #4791bd; background: #c5e8f8; display: flex; align-items: center; justify-content: center; }

.watermark { position: absolute; left: 1117px; top: 657px; opacity: .6; filter: drop-shadow(0 0 2px #888); }
.watermark text { font: 400 48px Roboto, sans-serif; fill: #fff; }

.taskbar { position: absolute; left: 0; bottom: 0; width: 1360px; height: 40px; background: linear-gradient(90deg, #001a24, #001321 50%, #030b1c); display: flex; align-items: stretch; color: #fff; }
.start { width: 48px; display: flex; align-items: center; justify-content: center; }
.tsearch { width: 288px; background: #f1f1f1; border: 1px solid #ccc; display: flex; align-items: center; padding: 0 4px 0 11px; color: #333; font-size: 15px; }
.tsearch .t { margin-left: 11px; }
.gifts { margin-left: auto; }
.tb { width: 48px; display: flex; align-items: center; justify-content: center; margin-right: 1px; }
.run { position: relative; }
.run::after { content: ""; position: absolute; left: 4px; right: 4px; bottom: 0; height: 2px; background: #76b9ed; }
.files { background: #32444d; }
.tb.edge { margin-left: 2px; }
.files::after { left: 0; right: 0; }
.tray { margin-left: auto; display: flex; align-items: center; padding-right: 24px; }
.meet { margin-left: 13px; }
.vol { margin-left: 9px; }
.net { margin-left: 7px; }
.clock { width: 70px; display: flex; flex-direction: column; align-items: center; line-height: 18px; }
.note { margin-left: 9px; }
</style>
